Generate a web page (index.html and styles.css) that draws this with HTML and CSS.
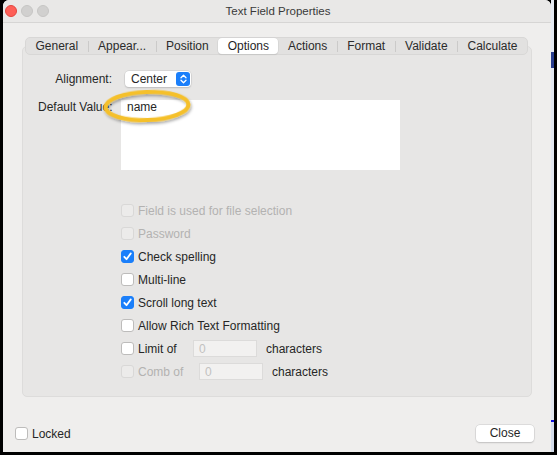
FILE: index.html
```html
<!DOCTYPE html>
<html>
<head>
<meta charset="utf-8">
<link rel="stylesheet" href="styles.css">
</head>
<body>
<div class="screen">
  <div class="window">
    <div class="titlebar">
      <div class="lights">
        <span class="light red"></span>
        <span class="light"></span>
        <span class="light"></span>
      </div>
      <div class="title">Text Field Properties</div>
    </div>
    <div class="content">
      <div class="tabgroup">
        <div class="tabs">
          <div class="tab">General</div>
          <div class="sep"></div>
          <div class="tab">Appear...</div>
          <div class="sep"></div>
          <div class="tab">Position</div>
          <div class="tab selected">Options</div>
          <div class="tab">Actions</div>
          <div class="sep"></div>
          <div class="tab">Format</div>
          <div class="sep"></div>
          <div class="tab">Validate</div>
          <div class="sep"></div>
          <div class="tab">Calculate</div>
        </div>
        <div class="box">
          <div class="row-align">
            <div class="lbl-right">Alignment:</div>
            <div class="popup">
              <span class="popup-text">Center</span>
              <span class="stepper">
                <svg width="7" height="10" viewBox="0 0 7 10"><path d="M1 3.8 L3.5 1.3 L6 3.8 M1 6.2 L3.5 8.7 L6 6.2" fill="none" stroke="#fff" stroke-width="1.3" stroke-linecap="round" stroke-linejoin="round"/></svg>
              </span>
            </div>
          </div>
          <div class="row-default">
            <div class="lbl-default">Default Value:</div>
            <div class="textarea">name</div>
            <svg class="circle" width="98" height="44" viewBox="0 0 98 44">
              <defs>
                <filter id="sh" x="-20%" y="-40%" width="140%" height="180%">
                  <feDropShadow dx="1" dy="2" stdDeviation="1.6" flood-color="#000" flood-opacity="0.35"/>
                </filter>
              </defs>
              <ellipse cx="47" cy="20" rx="41.5" ry="14" fill="none" stroke="#f5c02a" stroke-width="4.2" filter="url(#sh)" transform="rotate(-2 47 20)"/>
            </svg>
          </div>
          <div class="checks">
            <div class="crow disabled"><span class="cb"></span><span>Field is used for file selection</span></div>
            <div class="crow disabled"><span class="cb"></span><span>Password</span></div>
            <div class="crow"><span class="cb on"><svg width="11" height="11" viewBox="0 0 11 11"><path d="M2.3 5.8 L4.5 8.2 L8.8 2.4" fill="none" stroke="#fff" stroke-width="1.8" stroke-linecap="round" stroke-linejoin="round"/></svg></span><span>Check spelling</span></div>
            <div class="crow"><span class="cb"></span><span>Multi-line</span></div>
            <div class="crow"><span class="cb on"><svg width="11" height="11" viewBox="0 0 11 11"><path d="M2.3 5.8 L4.5 8.2 L8.8 2.4" fill="none" stroke="#fff" stroke-width="1.8" stroke-linecap="round" stroke-linejoin="round"/></svg></span><span>Scroll long text</span></div>
            <div class="crow"><span class="cb"></span><span>Allow Rich Text Formatting</span></div>
            <div class="crow"><span class="cb"></span><span class="lbl-limit">Limit of</span><span class="numfield">0</span><span class="chars">characters</span></div>
            <div class="crow"><span class="cb dis"></span><span class="lbl-comb dim">Comb of</span><span class="numfield">0</span><span class="chars">characters</span></div>
          </div>
        </div>
      </div>
      <div class="footer">
        <div class="crow locked"><span class="cb"></span><span>Locked</span></div>
        <div class="button">Close</div>
      </div>
    </div>
  </div>
  <div class="strip"></div>
</div>
</body>
</html>
```

FILE: styles.css
```css
html, body {
  margin: 0;
  padding: 0;
  background: #000;
}
body {
  width: 557px;
  height: 455px;
  overflow: hidden;
  font-family: "Liberation Sans", Arial, sans-serif;
  font-size: 12px;
  color: #262626;
}
.screen {
  display: flex;
  padding-left: 3px;
  height: 452px;
}
.window {
  width: 548px;
  height: 452px;
  background: #efeeed;
  border-radius: 6px 6px 0 0;
  display: flex;
  flex-direction: column;
  overflow: hidden;
}
.strip {
  width: 3px;
  height: 452px;
  background: linear-gradient(#e6ebf3 0, #e6ebf3 52px, #2a3f8f 52px, #2a3f8f 68px, #e3e8f1 68px, #e3e8f1 420px, #1010e0 420px, #1010e0 422px, #d4dcea 422px);
}
.titlebar {
  height: 22px;
  border-bottom: 1px solid #d6d5d4;
  background: #e9e8e7;
  display: flex;
  align-items: center;
  position: relative;
}
.lights {
  display: flex;
  gap: 4px;
  padding-left: 2px;
  width: 60px;
}
.light {
  width: 12px;
  height: 12px;
  border-radius: 50%;
  background: #d1d0cf;
  box-sizing: border-box;
  border: 1px solid #c6c5c4;
}
.light.red {
  background: #fe5f57;
  border-color: #e2463f;
}
.title {
  flex: 1;
  text-align: center;
  margin-right: 60px;
  font-size: 11.5px;
  color: #3a3a3a;
}
.content {
  flex: 1;
  display: flex;
  flex-direction: column;
  padding-top: 14px;
}
.tabgroup {
  margin-left: 19px;
  width: 510px;
  display: flex;
  flex-direction: column;
}
.tabs {
  margin: 0 4px -9px 3px;
  height: 18px;
  box-sizing: border-box;
  background: #e2e1e0;
  border: 1px solid #d8d7d6;
  border-radius: 5px;
  display: flex;
  align-items: center;
  position: relative;
  z-index: 1;
}
.tab {
  flex: 1 1 auto;
  text-align: center;
  height: 16px;
  line-height: 16px;
  color: #2b2b2b;
  padding: 0 6px;
}
.tab.selected {
  background: #fff;
  border-radius: 4px;
  box-shadow: 0 0 0 0.5px #cfcfcf, 0 1px 1px rgba(0,0,0,0.12);
  color: #1f1f1f;
}
.sep {
  width: 1px;
  height: 11px;
  background: #cbcac9;
  flex: none;
}
.box {
  height: 351px;
  box-sizing: border-box;
  background: #e7e6e5;
  border: 1px solid #dddcdb;
  border-radius: 5px;
  padding-top: 24px;
}
.row-align {
  display: flex;
  align-items: center;
  height: 16px;
}
.lbl-right {
  width: 89px;
  text-align: right;
  margin-right: 13px;
}
.popup {
  width: 66px;
  height: 16px;
  box-sizing: border-box;
  background: #fff;
  border-radius: 4px;
  box-shadow: 0 0 0 0.5px #c8c8c8, 0 1px 1.5px rgba(0,0,0,0.2);
  display: flex;
  align-items: center;
  justify-content: space-between;
  padding: 0 1px 0 6px;
}
.stepper {
  width: 14px;
  height: 14px;
  border-radius: 3px;
  background: #1b7ffa;
  display: flex;
  align-items: center;
  justify-content: center;
}
.stepper svg { display: block; }
.row-default {
  display: flex;
  align-items: flex-start;
  margin-top: 13px;
  position: relative;
}
.lbl-default {
  margin-left: 15px;
  width: 83px;
  white-space: nowrap;
  line-height: 14px;
}
.textarea {
  width: 279px;
  height: 70px;
  background: #fff;
  box-sizing: border-box;
  padding: 0 6px;
  line-height: 14px;
  position: relative;
  z-index: 1;
}
.circle {
  position: absolute;
  left: 77px;
  top: -14px;
  z-index: 2;
}
.checks {
  margin-top: 29px;
  margin-left: 98px;
  display: flex;
  flex-direction: column;
}
.crow {
  display: flex;
  align-items: center;
  height: 23px;
}
.cb {
  width: 13px;
  height: 13px;
  box-sizing: border-box;
  border: 1px solid #bdbcbb;
  border-radius: 3px;
  background: #fff;
  margin-right: 4px;
  display: flex;
  align-items: center;
  justify-content: center;
  flex: none;
}
.cb.on {
  background: #1b7ffa;
  border-color: #1b7ffa;
}
.cb svg { display: block; }
.crow.disabled, .dim { color: #b3b2b1; }
.crow.disabled .cb, .cb.dis {
  background: #ecebea;
  border-color: #d9d8d7;
}
.lbl-limit { width: 55px; }
.lbl-comb { width: 61px; }
.numfield {
  width: 64px;
  height: 17px;
  box-sizing: border-box;
  background: #f2f1f0;
  border: 1px solid #dcdbda;
  color: #c2c1c0;
  padding: 1px 5px 0;
  line-height: 14px;
}
.chars { margin-left: 9px; }
.footer {
  display: flex;
  align-items: center;
  justify-content: space-between;
  padding: 0 17px 0 12px;
  margin-top: 28px;
  height: 17px;
}
.locked { height: 17px; }
.button {
  width: 58px;
  height: 17px;
  line-height: 17px;
  background: #fff;
  border-radius: 4px;
  text-align: center;
  box-shadow: 0 0 0 0.5px #c9c9c9, 0 1px 1.5px rgba(0,0,0,0.2);
}
```
